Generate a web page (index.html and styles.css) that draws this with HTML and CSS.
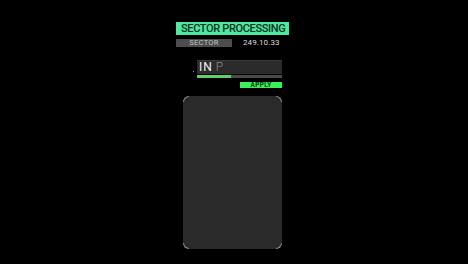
FILE: index.html
```html
<!DOCTYPE html>
<html>
<head>
<meta charset="utf-8">
<link rel="stylesheet" href="styles.css">
</head>
<body>
<div class="col">
  <div class="title">SECTOR PROCESSING</div>
  <div class="meta">
    <div class="tag">SECTOR</div>
    <div class="value">249.10.33</div>
  </div>
  <div class="field">
    <span class="dot"></span>
    <div class="input"><span class="typed">IN</span><span class="ph">P</span></div>
    <div class="progress"><div class="fill" style="width:40%"></div></div>
    <div class="actions"><div class="apply">APPLY</div></div>
  </div>
  <div class="panel">
    <span class="corner tl"></span>
    <span class="corner tr"></span>
    <span class="corner bl"></span>
    <span class="corner br"></span>
  </div>
</div>
</body>
</html>
```
FILE: styles.css
```css
html, body { margin: 0; padding: 0; background: #000; }
body { width: 468px; height: 264px; overflow: hidden; font-family: Roboto, "Liberation Sans", sans-serif; }
.col { width: 113px; margin-left: 176px; padding-top: 22px; display: flex; flex-direction: column; }
.title { height: 13px; background: #4ee89e; color: #0b2e1e; font-size: 11px; line-height: 14px; font-weight: 500; padding-left: 5px; letter-spacing: -0.35px; white-space: nowrap; overflow: hidden; }
.meta { display: flex; align-items: center; margin-top: 4px; height: 8px; }
.tag { width: 56px; height: 8px; background: #4d4d4d; color: #c4c4c4; font-size: 7.5px; line-height: 8px; text-align: center; letter-spacing: 0.3px; }
.value { margin-left: 11px; color: #dcdcdc; font-size: 8px; line-height: 8px; letter-spacing: 0.1px; }
.field { position: relative; margin-left: 21px; width: 85px; margin-top: 13px; display: flex; flex-direction: column; }
.dot { position: absolute; left: -4px; top: 11px; width: 1px; height: 1px; background: #aaa; }
.input { height: 14px; background: #2b2b2b; border-top: 1px solid #3a3a3a; box-sizing: border-box; font-size: 12px; line-height: 13px; font-weight: 300; padding-left: 2px; letter-spacing: 1px; }
.typed { color: #f2f2f2; font-weight: 400; }
.ph { color: #8a8a8a; margin-left: 3px; }
.progress { margin-top: 1px; height: 3px; background: #4a4a4a; }
.fill { height: 100%; background: #5fcf6a; }
.actions { display: flex; justify-content: flex-end; margin-top: 4px; }
.apply { width: 42px; height: 6px; background: #3cf05a; color: #0c3a12; font-size: 6.5px; line-height: 6.5px; font-weight: 700; text-align: center; letter-spacing: 0.3px; }
.panel { position: relative; margin-left: 7px; margin-top: 8px; width: 99px; height: 153px; background: #2a2a2a; border-radius: 6px; }
.corner { position: absolute; width: 5px; height: 5px; border: 0 solid #8a8a8a; }
.tl { left: 0; top: 0; border-left-width: 1px; border-top-width: 1px; border-top-left-radius: 6px; }
.tr { right: 0; top: 0; border-right-width: 1px; border-top-width: 1px; border-top-right-radius: 6px; }
.bl { left: 0; bottom: 0; border-left-width: 1px; border-bottom-width: 1px; border-bottom-left-radius: 6px; }
.br { right: 0; bottom: 0; border-right-width: 1px; border-bottom-width: 1px; border-bottom-right-radius: 6px; }
```
